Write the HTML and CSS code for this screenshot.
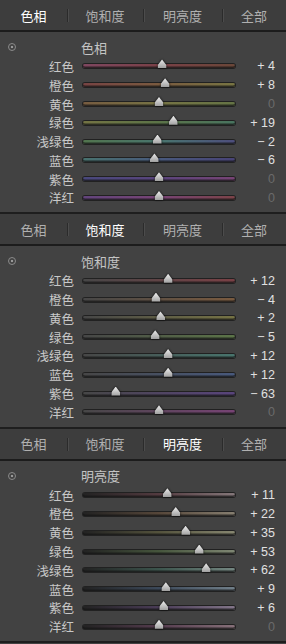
FILE: index.html
```html
<!DOCTYPE html>
<html lang="zh-CN">
<head>
    <meta charset="UTF-8">
    <meta name="viewport" content="width=device-width, initial-scale=1.0">
    <title>HSL</title>
    <link rel="stylesheet" href="styles.css">
</head>
<body>
    <!-- 色相 -->
    <div class="section hue">
        <div class="tabs">
            <span class="tab active">色相</span>
            <span class="tab">饱和度</span>
            <span class="tab">明亮度</span>
            <span class="tab">全部</span>
        </div>
        <div class="panel">
            <div class="head"><span class="target"></span><span class="title">色相</span></div>
            <div class="row"><span class="label">红色</span><div class="track red"><span class="thumb" style="left:52%"></span></div><span class="val">+ 4</span></div>
            <div class="row"><span class="label">橙色</span><div class="track orange"><span class="thumb" style="left:54%"></span></div><span class="val">+ 8</span></div>
            <div class="row"><span class="label">黄色</span><div class="track yellow"><span class="thumb" style="left:50%"></span></div><span class="val zero">0</span></div>
            <div class="row"><span class="label">绿色</span><div class="track green"><span class="thumb" style="left:59.5%"></span></div><span class="val">+ 19</span></div>
            <div class="row"><span class="label">浅绿色</span><div class="track aqua"><span class="thumb" style="left:49%"></span></div><span class="val">− 2</span></div>
            <div class="row"><span class="label">蓝色</span><div class="track blue"><span class="thumb" style="left:47%"></span></div><span class="val">− 6</span></div>
            <div class="row"><span class="label">紫色</span><div class="track purple"><span class="thumb" style="left:50%"></span></div><span class="val zero">0</span></div>
            <div class="row"><span class="label">洋红</span><div class="track magenta"><span class="thumb" style="left:50%"></span></div><span class="val zero">0</span></div>
        </div>
    </div>

    <!-- 饱和度 -->
    <div class="section sat">
        <div class="tabs">
            <span class="tab">色相</span>
            <span class="tab active">饱和度</span>
            <span class="tab">明亮度</span>
            <span class="tab">全部</span>
        </div>
        <div class="panel">
            <div class="head"><span class="target"></span><span class="title">饱和度</span></div>
            <div class="row"><span class="label">红色</span><div class="track red"><span class="thumb" style="left:56%"></span></div><span class="val">+ 12</span></div>
            <div class="row"><span class="label">橙色</span><div class="track orange"><span class="thumb" style="left:48%"></span></div><span class="val">− 4</span></div>
            <div class="row"><span class="label">黄色</span><div class="track yellow"><span class="thumb" style="left:51%"></span></div><span class="val">+ 2</span></div>
            <div class="row"><span class="label">绿色</span><div class="track green"><span class="thumb" style="left:47.5%"></span></div><span class="val">− 5</span></div>
            <div class="row"><span class="label">浅绿色</span><div class="track aqua"><span class="thumb" style="left:56%"></span></div><span class="val">+ 12</span></div>
            <div class="row"><span class="label">蓝色</span><div class="track blue"><span class="thumb" style="left:56%"></span></div><span class="val">+ 12</span></div>
            <div class="row"><span class="label">紫色</span><div class="track purple"><span class="thumb" style="left:21.5%"></span></div><span class="val">− 63</span></div>
            <div class="row"><span class="label">洋红</span><div class="track magenta"><span class="thumb" style="left:50%"></span></div><span class="val zero">0</span></div>
        </div>
    </div>

    <!-- 明亮度 -->
    <div class="section lum">
        <div class="tabs">
            <span class="tab">色相</span>
            <span class="tab">饱和度</span>
            <span class="tab active">明亮度</span>
            <span class="tab">全部</span>
        </div>
        <div class="panel">
            <div class="head"><span class="target"></span><span class="title">明亮度</span></div>
            <div class="row"><span class="label">红色</span><div class="track red"><span class="thumb" style="left:55.5%"></span></div><span class="val">+ 11</span></div>
            <div class="row"><span class="label">橙色</span><div class="track orange"><span class="thumb" style="left:61%"></span></div><span class="val">+ 22</span></div>
            <div class="row"><span class="label">黄色</span><div class="track yellow"><span class="thumb" style="left:67.5%"></span></div><span class="val">+ 35</span></div>
            <div class="row"><span class="label">绿色</span><div class="track green"><span class="thumb" style="left:76.5%"></span></div><span class="val">+ 53</span></div>
            <div class="row"><span class="label">浅绿色</span><div class="track aqua"><span class="thumb" style="left:81%"></span></div><span class="val">+ 62</span></div>
            <div class="row"><span class="label">蓝色</span><div class="track blue"><span class="thumb" style="left:54.5%"></span></div><span class="val">+ 9</span></div>
            <div class="row"><span class="label">紫色</span><div class="track purple"><span class="thumb" style="left:53%"></span></div><span class="val">+ 6</span></div>
            <div class="row"><span class="label">洋红</span><div class="track magenta"><span class="thumb" style="left:50%"></span></div><span class="val zero">0</span></div>
        </div>
    </div>
</body>
</html>
```

FILE: styles.css
```css
body {
    margin: 0;
    width: 286px;
    background: #424242;
    font-family: "Noto Sans CJK SC", "Liberation Sans", sans-serif;
    color: #cfcfcf;
}
.section {
    height: 214.4px;
    box-sizing: border-box;
    border-bottom: 2px solid #1e1e1e;
    background: #424242;
}
.tabs {
    display: grid;
    grid-template-columns: 67px 76px 79px 64px;
    height: 30px;
    border-bottom: 2px solid #1c1c1c;
    background: #3d3d3d;
}
.tab {
    position: relative;
    display: flex;
    align-items: center;
    justify-content: center;
    font-size: 13px;
    color: #b0b0b0;
}
.tab + .tab::before {
    content: "";
    position: absolute;
    left: 0;
    top: 9px;
    height: 13px;
    border-left: 1px solid #2b2b2b;
    box-shadow: 1px 0 0 #4c4c4c;
}
.tab.active {
    color: #fff;
}
.panel {
    padding: 5px 0;
}
.head {
    display: flex;
    align-items: center;
    height: 20px;
}
.target {
    width: 6px;
    height: 6px;
    margin-left: 8px;
    border: 1px solid #8a8a8a;
    border-radius: 50%;
    background: radial-gradient(circle, #9a9a9a 0 1.2px, transparent 1.6px);
}
.title {
    margin-left: 65px;
    font-size: 13px;
    color: #c4c4c4;
}
.row {
    display: flex;
    align-items: center;
    height: 18.8px;
}
.label {
    width: 74px;
    text-align: right;
    font-size: 12.5px;
    color: #c8c8c8;
}
.track {
    position: relative;
    width: 152px;
    height: 4px;
    margin-left: 9px;
    border-radius: 2px;
    box-shadow: inset 0 -1.5px 0 rgba(0, 0, 0, 0.75), 0 0 0 1px rgba(0, 0, 0, 0.5);
}
.track::before {
    content: "";
    position: absolute;
    inset: 0;
    border-radius: 2px;
    background: rgba(66, 66, 66, 0.35);
}
.thumb {
    position: absolute;
    z-index: 1;
    top: -5px;
    width: 9px;
    height: 9px;
    transform: translateX(-50%);
    filter: drop-shadow(0 0 1px rgba(0, 0, 0, 0.9));
}
.thumb::before {
    content: "";
    position: absolute;
    inset: 0;
    background: linear-gradient(#eeeeee, #a0a0a0);
    clip-path: polygon(50% 0, 100% 65%, 100% 100%, 0 100%, 0 65%);
}
.val {
    flex: 1;
    padding-right: 11px;
    text-align: right;
    font-family: "Liberation Sans", sans-serif;
    font-size: 12.5px;
    color: #e0e0e0;
}
.val.zero {
    color: #6a6a6a;
}

/* 色相 */
.hue .red { background: linear-gradient(90deg, #a04a70, #98404a, #804a34); }
.hue .orange { background: linear-gradient(90deg, #944444, #98683e, #949044); }
.hue .yellow { background: linear-gradient(90deg, #946a40, #928e46, #789048); }
.hue .green { background: linear-gradient(90deg, #8e8e44, #6a904c, #4c9070); }
.hue .aqua { background: linear-gradient(90deg, #5a9054, #4c9084, #54549c); }
.hue .blue { background: linear-gradient(90deg, #4c8c86, #4c669c, #4c4494); }
.hue .purple { background: linear-gradient(90deg, #4c4c9c, #66469c, #944490); }
.hue .magenta { background: linear-gradient(90deg, #74469c, #944490, #9c444c); }

/* 饱和度 */
.sat .red { background: linear-gradient(90deg, #4a4a4a, #984048); }
.sat .orange { background: linear-gradient(90deg, #4a4a4a, #98683e); }
.sat .yellow { background: linear-gradient(90deg, #4a4a4a, #928e46); }
.sat .green { background: linear-gradient(90deg, #4a4a4a, #6a904c); }
.sat .aqua { background: linear-gradient(90deg, #4a4a4a, #4c9084); }
.sat .blue { background: linear-gradient(90deg, #4a4a4a, #4c669c); }
.sat .purple { background: linear-gradient(90deg, #4a4a4a, #66469c); }
.sat .magenta { background: linear-gradient(90deg, #4a4a4a, #944490); }

/* 明亮度 */
.lum .red { background: linear-gradient(90deg, #121212, #5e3840, #a89498); }
.lum .orange { background: linear-gradient(90deg, #121212, #624a36, #aca08a); }
.lum .yellow { background: linear-gradient(90deg, #121212, #5e5c3a, #acac8a); }
.lum .green { background: linear-gradient(90deg, #121212, #48603a, #a0ac8e); }
.lum .aqua { background: linear-gradient(90deg, #121212, #3a6054, #90aca4); }
.lum .blue { background: linear-gradient(90deg, #121212, #3a4e68, #8aa0b0); }
.lum .purple { background: linear-gradient(90deg, #121212, #503a64, #a692b0); }
.lum .magenta { background: linear-gradient(90deg, #121212, #603a56, #ac8a98); }
```
